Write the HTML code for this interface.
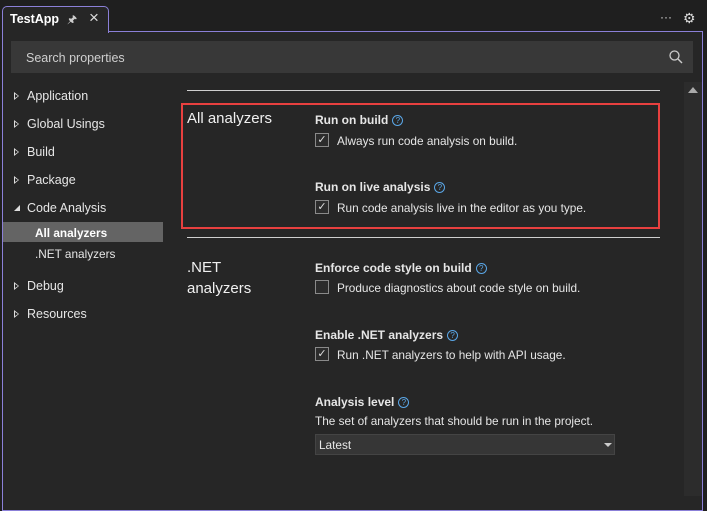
<!DOCTYPE html>
<html><head><style>
*{margin:0;padding:0;box-sizing:border-box}
body{width:707px;height:496px;background:#1f1f1f;font-family:"Liberation Sans",sans-serif;color:#e6e6e6;font-size:11.8px;position:relative;overflow:hidden}
.a{position:absolute;white-space:nowrap}
.tab{left:2px;top:6px;width:107px;height:27px;border:1px solid #8b80d8;border-bottom:none;border-radius:5px 5px 0 0;background:#262626;z-index:2}
.panel{left:2px;top:31px;width:701px;height:480px;border:1px solid #8b80d8;background:#262626}
.tri{width:0;height:0;border-top:4px solid transparent;border-bottom:4px solid transparent;border-left:5px solid #ddd}
.tri:after{content:"";position:absolute;left:-4px;top:-2px;border-top:2px solid transparent;border-bottom:2px solid transparent;border-left:3px solid #262626}
.nav{left:27px;font-size:12.5px}
.cb{width:14px;height:14px;border:1px solid #8a8a8a;background:#2c2c2c;font-size:11px;line-height:12px;text-align:center;color:#ddd}
.b{font-weight:bold;font-size:12px}
.q{display:inline-block;width:11px;height:11px;border:1px solid #5aa6e6;border-radius:50%;color:#5aa6e6;font-size:8px;line-height:9px;text-align:center;vertical-align:1px;margin-left:4px;font-weight:normal}
.h{font-size:15px;color:#f0f0f0}
.ln{height:1px;background:#cfcfcf;left:187px;width:473px}
</style></head><body>
<div class="a tab"><span class="a" style="left:7px;top:5px;font-weight:bold;font-size:12.5px;color:#fff">TestApp</span>
<span class="a" style="left:64px;top:4px;font-size:11px;color:#ccc">&#x1F588;</span>
<span class="a" style="left:86px;top:1px;font-size:17px;color:#ddd">×</span></div>
<div class="a" style="left:660px;top:10px;font-size:12px;color:#ddd">···</div>
<div class="a" style="left:683px;top:10px;font-size:14px;color:#ddd">⚙</div>
<div class="a panel"></div>
<div class="a" style="left:11px;top:41px;width:682px;height:32px;background:#383838"></div>
<div class="a" style="left:26px;top:51px;color:#cfcfcf;font-size:12.5px">Search properties</div>
<svg class="a" style="left:668px;top:49px" width="16" height="16"><circle cx="6.5" cy="6.5" r="4.5" stroke="#ccc" stroke-width="1.3" fill="none"/><line x1="10" y1="10" x2="14" y2="14" stroke="#ccc" stroke-width="1.4"/></svg>
<div class="a" style="left:684px;top:82px;width:18px;height:414px;background:#2c2c2c"></div>
<div class="a" style="left:688px;top:87px;border-left:5px solid transparent;border-right:5px solid transparent;border-bottom:6px solid #aaa"></div>

<div class="a tri" style="left:14px;top:92px"></div><div class="a nav" style="top:89px">Application</div>
<div class="a tri" style="left:14px;top:120px"></div><div class="a nav" style="top:117px">Global Usings</div>
<div class="a tri" style="left:14px;top:148px"></div><div class="a nav" style="top:145px">Build</div>
<div class="a tri" style="left:14px;top:176px"></div><div class="a nav" style="top:173px">Package</div>
<div class="a" style="left:14px;top:205px;border-left:6px solid transparent;border-bottom:6px solid #ddd"></div><div class="a nav" style="top:201px">Code Analysis</div>
<div class="a" style="left:3px;top:222px;width:160px;height:20px;background:#646464"></div>
<div class="a" style="left:35px;top:226px;font-weight:bold;color:#fff">All analyzers</div>
<div class="a" style="left:35px;top:247px">.NET analyzers</div>
<div class="a tri" style="left:14px;top:282px"></div><div class="a nav" style="top:279px">Debug</div>
<div class="a tri" style="left:14px;top:310px"></div><div class="a nav" style="top:307px">Resources</div>

<div class="a ln" style="top:90px"></div>
<div class="a" style="left:181px;top:103px;width:479px;height:126px;border:2px solid #e8403f"></div>
<div class="a h" style="left:187px;top:110px">All analyzers</div>
<div class="a b" style="left:315px;top:113px">Run on build<span class="q">?</span></div>
<div class="a cb" style="left:315px;top:133px">✓</div><div class="a" style="left:337px;top:134px">Always run code analysis on build.</div>
<div class="a b" style="left:315px;top:180px">Run on live analysis<span class="q">?</span></div>
<div class="a cb" style="left:315px;top:200px">✓</div><div class="a" style="left:337px;top:201px">Run code analysis live in the editor as you type.</div>
<div class="a ln" style="top:237px"></div>
<div class="a h" style="left:187px;top:257px;line-height:21px">.NET<br>analyzers</div>
<div class="a b" style="left:315px;top:261px">Enforce code style on build<span class="q">?</span></div>
<div class="a cb" style="left:315px;top:280px"></div><div class="a" style="left:337px;top:281px">Produce diagnostics about code style on build.</div>
<div class="a b" style="left:315px;top:328px">Enable .NET analyzers<span class="q">?</span></div>
<div class="a cb" style="left:315px;top:347px">✓</div><div class="a" style="left:337px;top:348px">Run .NET analyzers to help with API usage.</div>
<div class="a b" style="left:315px;top:395px">Analysis level<span class="q">?</span></div>
<div class="a" style="left:315px;top:414px">The set of analyzers that should be run in the project.</div>
<div class="a" style="left:315px;top:434px;width:300px;height:21px;background:#363636;border:1px solid #444"></div>
<div class="a" style="left:319px;top:438px">Latest</div>
<div class="a" style="left:604px;top:443px;border-left:4px solid transparent;border-right:4px solid transparent;border-top:4px solid #ccc"></div>
</body></html>
